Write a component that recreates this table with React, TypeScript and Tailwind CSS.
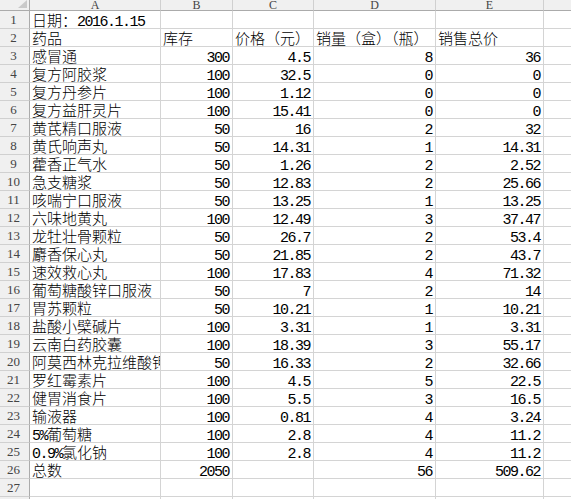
import React from "react";

type Row = [string, string, string, string, string];

const rows: Row[] = [
  ["日期：2016.1.15", "", "", "", ""],
  ["药品", "库存", "价格（元）", "销量（盒）（瓶）", "销售总价"],
  ["感冒通", "300", "4.5", "8", "36"],
  ["复方阿胶浆", "100", "32.5", "0", "0"],
  ["复方丹参片", "100", "1.12", "0", "0"],
  ["复方益肝灵片", "100", "15.41", "0", "0"],
  ["黄芪精口服液", "50", "16", "2", "32"],
  ["黄氏响声丸", "50", "14.31", "1", "14.31"],
  ["藿香正气水", "50", "1.26", "2", "2.52"],
  ["急支糖浆", "50", "12.83", "2", "25.66"],
  ["咳喘宁口服液", "50", "13.25", "1", "13.25"],
  ["六味地黄丸", "100", "12.49", "3", "37.47"],
  ["龙牡壮骨颗粒", "50", "26.7", "2", "53.4"],
  ["麝香保心丸", "50", "21.85", "2", "43.7"],
  ["速效救心丸", "100", "17.83", "4", "71.32"],
  ["葡萄糖酸锌口服液", "50", "7", "2", "14"],
  ["胃苏颗粒", "50", "10.21", "1", "10.21"],
  ["盐酸小檗碱片", "100", "3.31", "1", "3.31"],
  ["云南白药胶囊", "100", "18.39", "3", "55.17"],
  ["阿莫西林克拉维酸钾", "50", "16.33", "2", "32.66"],
  ["罗红霉素片", "100", "4.5", "5", "22.5"],
  ["健胃消食片", "100", "5.5", "3", "16.5"],
  ["输液器", "100", "0.81", "4", "3.24"],
  ["5%葡萄糖", "100", "2.8", "4", "11.2"],
  ["0.9%氯化钠", "100", "2.8", "4", "11.2"],
  ["总数", "2050", "", "56", "509.62"],
  ["", "", "", "", ""],
  ["", "", "", "", ""],
];

const isNum = (s: string) => /^[0-9.]+$/.test(s);

function Mixed({ text }: { text: string }) {
  const parts = text.match(/[\x00-\x7f]+|[^\x00-\x7f]+/g) || [];
  return (
    <>
      {parts.map((p, i) =>
        /^[\x00-\x7f]+$/.test(p) ? (
          <span key={i} className="font-['Liberation_Mono',monospace] font-normal tracking-[-1.5px]">
            {p}
          </span>
        ) : (
          <span key={i}>{p}</span>
        )
      )}
    </>
  );
}

const letters = ["A", "B", "C", "D", "E", ""];

export default function App() {
  return (
    <div className="w-[571px] h-[499px] overflow-hidden bg-white text-black font-['Noto_Sans_CJK_SC','Noto_Sans_CJK_JP',sans-serif]">
      <div className="grid grid-cols-[30px_131px_72px_81px_122px_108px_40px] auto-rows-[18px] [grid-template-rows:11px]">
        <div className="relative h-[11px] bg-[#f0f0f0] border-r border-b border-[#ababab] overflow-hidden">
          <div className="absolute right-[2px] bottom-[2px] w-0 h-0 border-l-[9px] border-l-transparent border-b-[8px] border-b-[#c9c9c9]" />
        </div>
        {letters.map((l, i) => (
          <div
            key={i}
            className="h-[11px] bg-[#f0f0f0] border-r border-r-[#d0d0d0] border-b border-b-[#ababab] text-center text-[12px] leading-[10px] text-[#444] font-['Liberation_Serif',serif] overflow-hidden"
          >
            {l}
          </div>
        ))}
        {rows.map((r, ri) => (
          <React.Fragment key={ri}>
            <div className="h-[18px] bg-[#f0f0f0] border-r border-r-[#ababab] border-b border-b-[#d0d0d0] text-center pr-[2px] text-[13px] leading-[17px] text-[#444] font-['Liberation_Serif',serif]">
              {ri < 27 ? ri + 1 : ""}
            </div>
            {r.map((c, ci) => (
              <div
                key={ci}
                className={
                  "h-[18px] border-r border-b border-[#d4d4d4] text-[15px] font-light leading-[17px] whitespace-nowrap overflow-hidden " +
                  (isNum(c) ? "text-right pr-[3px]" : "text-left pl-[2px]")
                }
              >
                {c ? <Mixed text={c} /> : null}
              </div>
            ))}
            <div className="h-[18px] border-r border-b border-[#d4d4d4]" />
          </React.Fragment>
        ))}
      </div>
    </div>
  );
}
